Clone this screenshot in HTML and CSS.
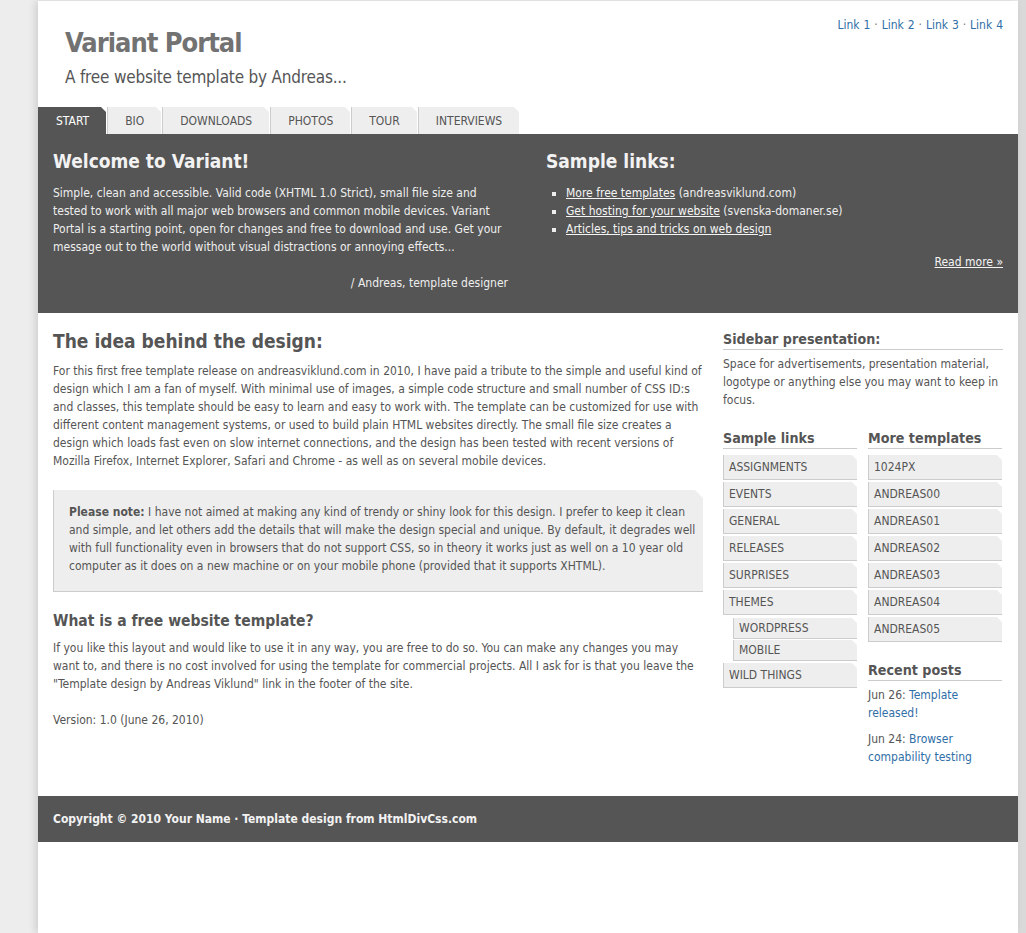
FILE: index.html
```html
<!DOCTYPE html>
<html lang="en">
<head>
<meta charset="utf-8">
<title>Variant Portal</title>
<link rel="stylesheet" href="styles.css">
</head>
<body>
<div class="page">
  <div class="header">
    <div class="brand">
      <h1 class="site-title">Variant Portal</h1>
      <p class="site-slogan">A free website template by Andreas...</p>
    </div>
    <p class="toplinks"><a href="#">Link 1</a> <span class="sep">·</span> <a href="#">Link 2</a> <span class="sep">·</span> <a href="#">Link 3</a> <span class="sep">·</span> <a href="#">Link 4</a></p>
  </div>

  <ul class="tabs">
    <li class="tab active"><a href="#">START</a></li>
    <li class="tab"><a href="#">BIO</a></li>
    <li class="tab"><a href="#">DOWNLOADS</a></li>
    <li class="tab"><a href="#">PHOTOS</a></li>
    <li class="tab"><a href="#">TOUR</a></li>
    <li class="tab"><a href="#">INTERVIEWS</a></li>
  </ul>

  <div class="intro">
    <div class="intro-col">
      <h2 class="intro-title">Welcome to Variant!</h2>
      <p>Simple, clean and accessible. Valid code (XHTML 1.0 Strict), small file size and tested to work with all major web browsers and common mobile devices. Variant Portal is a starting point, open for changes and free to download and use. Get your message out to the world without visual distractions or annoying effects...</p>
      <p class="signature">/ Andreas, template designer</p>
    </div>
    <div class="intro-col">
      <h2 class="intro-title">Sample links:</h2>
      <ul class="intro-links">
        <li><a href="#">More free templates</a> (andreasviklund.com)</li>
        <li><a href="#">Get hosting for your website</a> (svenska-domaner.se)</li>
        <li><a href="#">Articles, tips and tricks on web design</a></li>
      </ul>
      <p class="readmore"><a href="#">Read more »</a></p>
    </div>
  </div>

  <div class="content">
    <div class="main">
      <h2 class="main-title">The idea behind the design:</h2>
      <p>For this first free template release on andreasviklund.com in 2010, I have paid a tribute to the simple and useful kind of design which I am a fan of myself. With minimal use of images, a simple code structure and small number of CSS ID:s and classes, this template should be easy to learn and easy to work with. The template can be customized for use with different content management systems, or used to build plain HTML websites directly. The small file size creates a design which loads fast even on slow internet connections, and the design has been tested with recent versions of Mozilla Firefox, Internet Explorer, Safari and Chrome - as well as on several mobile devices.</p>
      <div class="note">
        <p><strong>Please note:</strong> I have not aimed at making any kind of trendy or shiny look for this design. I prefer to keep it clean and simple, and let others add the details that will make the design special and unique. By default, it degrades well with full functionality even in browsers that do not support CSS, so in theory it works just as well on a 10 year old computer as it does on a new machine or on your mobile phone (provided that it supports XHTML).</p>
      </div>
      <h3 class="sub-title">What is a free website template?</h3>
      <p>If you like this layout and would like to use it in any way, you are free to do so. You can make any changes you may want to, and there is no cost involved for using the template for commercial projects. All I ask for is that you leave the "Template design by Andreas Viklund" link in the footer of the site.</p>
      <p class="version">Version: 1.0 (June 26, 2010)</p>
    </div>

    <div class="sidebar">
      <h3 class="side-title">Sidebar presentation:</h3>
      <p class="side-text">Space for advertisements, presentation material, logotype or anything else you may want to keep in focus.</p>
      <div class="side-cols">
        <div class="side-col">
          <h3 class="side-title">Sample links</h3>
          <ul class="menu">
            <li><a href="#">ASSIGNMENTS</a></li>
            <li><a href="#">EVENTS</a></li>
            <li><a href="#">GENERAL</a></li>
            <li><a href="#">RELEASES</a></li>
            <li><a href="#">SURPRISES</a></li>
            <li><a href="#">THEMES</a>
              <ul class="submenu">
                <li><a href="#">WORDPRESS</a></li>
                <li><a href="#">MOBILE</a></li>
              </ul>
            </li>
            <li><a href="#">WILD THINGS</a></li>
          </ul>
        </div>
        <div class="side-col">
          <h3 class="side-title">More templates</h3>
          <ul class="menu">
            <li><a href="#">1024PX</a></li>
            <li><a href="#">ANDREAS00</a></li>
            <li><a href="#">ANDREAS01</a></li>
            <li><a href="#">ANDREAS02</a></li>
            <li><a href="#">ANDREAS03</a></li>
            <li><a href="#">ANDREAS04</a></li>
            <li><a href="#">ANDREAS05</a></li>
          </ul>
          <h3 class="side-title recent-title">Recent posts</h3>
          <p class="post">Jun 26: <a href="#">Template released!</a></p>
          <p class="post">Jun 24: <a href="#">Browser compability testing</a></p>
        </div>
      </div>
    </div>
  </div>

  <div class="footer">
    <p>Copyright © 2010 Your Name · Template design from HtmlDivCss.com</p>
  </div>
</div>
</body>
</html>
```

FILE: styles.css
```css
html, body {
  margin: 0;
  padding: 0;
}

body {
  background: linear-gradient(to left, #d9d9d9 8px, #ededed 8px);
  font-family: "DejaVu Sans Condensed", "DejaVu Sans", sans-serif;
  font-size: 12px;
  line-height: 18px;
  color: #555;
}

p, h1, h2, h3, ul {
  margin: 0;
  padding: 0;
}

a {
  color: #2f6ea6;
  text-decoration: none;
}

.page {
  width: 980px;
  margin: 1px 8px 0 38px;
  min-height: calc(100vh - 1px);
  background: #fff;
  box-shadow: -3px 0 7px rgba(0, 0, 0, 0.12);
}

/* header */
.header {
  display: flex;
  justify-content: space-between;
  align-items: flex-start;
  padding: 15px 15px 0 27px;
}

.site-title {
  margin-top: 10px;
  font-size: 27px;
  line-height: 34px;
  font-weight: bold;
  color: #727272;
  letter-spacing: -1px;
}

.site-slogan {
  margin-top: 6px;
  font-size: 17px;
  line-height: 22px;
  letter-spacing: -0.2px;
  color: #555;
}

.toplinks {
  color: #888;
  word-spacing: 0.5px;
}

.toplinks .sep {
  color: #777;
}

/* tabs */
.tabs {
  display: flex;
  list-style: none;
  margin-top: 19px;
  height: 27px;
}

.tab {
  position: relative;
  margin-right: 1px;
  background: #eee;
  border-left: 1px solid #ccc;
}

.tab::after {
  content: "";
  position: absolute;
  top: 0;
  right: 0;
  border-style: solid;
  border-width: 0 5px 5px 0;
  border-color: transparent #fff transparent transparent;
}

.tab a {
  display: block;
  padding: 1px 17px 0;
  line-height: 26px;
  color: #555;
}

.tab.active {
  background: #555;
  border-left-color: #555;
}

.tab.active a {
  color: #fff;
}

/* intro panel */
.intro {
  display: grid;
  grid-template-columns: 1fr 1fr;
  column-gap: 36px;
  background: #555;
  color: #eee;
  padding: 15px 15px 21px;
}

.intro-title {
  font-size: 19px;
  line-height: 24px;
  font-weight: bold;
  color: #f2f2f2;
  margin-bottom: 11px;
}

.signature {
  margin-top: 18px;
  text-align: right;
  padding-right: 2px;
}

.intro-links {
  list-style: square;
  padding-left: 20px;
}

.intro a {
  color: #f4f4f4;
  text-decoration: underline;
}

.readmore {
  margin-top: 15px;
  text-align: right;
}

/* content */
.content {
  display: flex;
  gap: 20px;
  padding: 16px 15px 22px;
}

.main {
  width: 650px;
}

.main-title {
  font-size: 19px;
  line-height: 24px;
  font-weight: bold;
  color: #555;
  margin-bottom: 9px;
}

.note {
  position: relative;
  margin-top: 20px;
  background: #eee;
  border-left: 1px solid #ccc;
  border-bottom: 1px solid #ccc;
  padding: 13px 4px 16px 15px;
}

.note::after {
  content: "";
  position: absolute;
  top: 0;
  right: 0;
  border-style: solid;
  border-width: 0 8px 8px 0;
  border-color: transparent #fff transparent transparent;
}

.sub-title {
  margin-top: 19px;
  margin-bottom: 8px;
  font-size: 15.5px;
  line-height: 20px;
  font-weight: bold;
  color: #555;
}

.version {
  margin-top: 18px;
}

/* sidebar */
.sidebar {
  width: 280px;
  padding-top: 1px;
}

.side-title {
  font-size: 14.2px;
  line-height: 18px;
  font-weight: bold;
  color: #555;
  padding-bottom: 1px;
  border-bottom: 1px solid #ccc;
}

.side-text {
  margin-top: 5px;
}

.side-cols {
  display: flex;
  gap: 11px;
  margin-top: 20px;
}

.side-col {
  width: 134px;
}

.menu {
  list-style: none;
  margin-top: 6px;
}

.menu li {
  margin-bottom: 2px;
}

.menu a {
  position: relative;
  display: block;
  background: #eee;
  border-left: 1px solid #ccc;
  border-bottom: 1px solid #ccc;
  padding-left: 5px;
  line-height: 24px;
  color: #555;
}

.menu a::after {
  content: "";
  position: absolute;
  top: 0;
  right: 0;
  border-style: solid;
  border-width: 0 5px 5px 0;
  border-color: transparent #fff transparent transparent;
}

.submenu {
  list-style: none;
  margin: 3px 0 0 10px;
}

.submenu li {
  margin-bottom: 1px;
}

.submenu li:last-child {
  margin-bottom: 0;
}

.submenu a {
  line-height: 20px;
}

.recent-title {
  margin-top: 19px;
  margin-bottom: 5px;
}

.post {
  margin-bottom: 8px;
}

/* footer */
.footer {
  background: #555;
  padding: 14px 15px;
  color: #f2f2f2;
  font-weight: bold;
}
```
